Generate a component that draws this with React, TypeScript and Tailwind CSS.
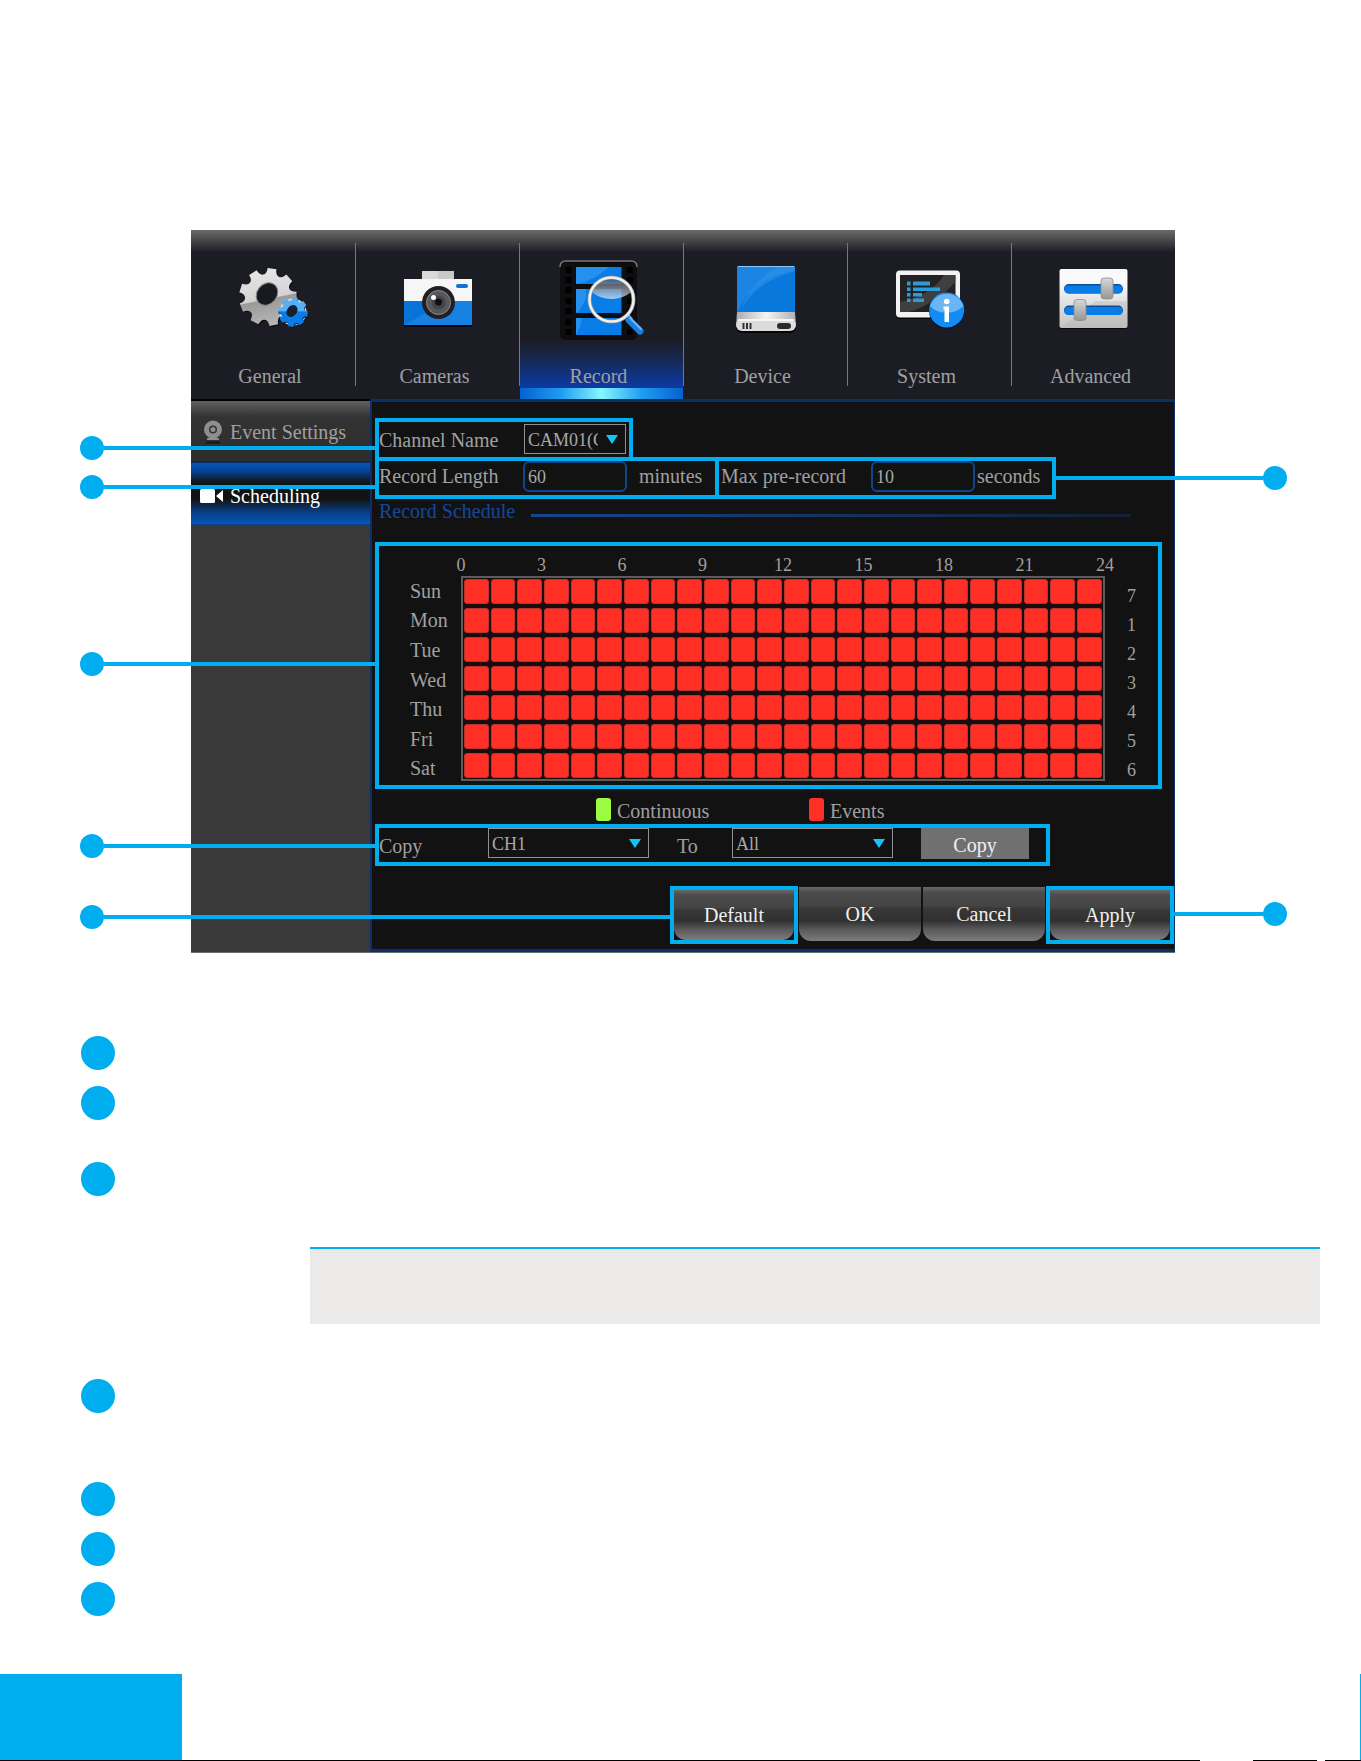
import clsx from 'clsx'
import React from 'react'

type CellMode = 'continuous' | 'events'

type CalloutProps = {
  side: 'left' | 'right'
  className: string
}

const DAYS = ['Sun', 'Mon', 'Tue', 'Wed', 'Thu', 'Fri', 'Sat']
const DAY_NUMBERS = [7, 1, 2, 3, 4, 5, 6]
const HOUR_MARKS = [0, 3, 6, 9, 12, 15, 18, 21, 24]

const FRAME = 'relative border-4 border-[#00aeef]'

const gearPath = (cx: number, cy: number, outer: number, inner: number, teeth: number) => {
  const step = (Math.PI * 2) / teeth
  const at = (radius: number, angle: number) =>
    `${(cx + radius * Math.cos(angle)).toFixed(2)} ${(cy + radius * Math.sin(angle)).toFixed(2)}`

  return (
    Array.from({ length: teeth }, (_, i) => {
      const a = i * step - Math.PI / 2.2
      return [
        `${i === 0 ? 'M' : 'L'}${at(outer, a - step * 0.22)}`,
        `L${at(outer, a + step * 0.22)}`,
        `Q${at(inner, a + step * 0.28)} ${at(inner, a + step * 0.5)}`,
        `Q${at(inner, a + step * 0.72)} ${at(outer, a + step * 0.78)}`,
      ].join(' ')
    }).join(' ') + 'Z'
  )
}

const GeneralIcon = () => (
  <svg viewBox="0 0 84 84" className="h-[84px] w-[84px] overflow-visible" aria-hidden="true">
    <defs>
      <linearGradient id="gearGray" x1="0.1" y1="0" x2="0.3" y2="1">
        <stop offset="0" stopColor="#e9e9e9" />
        <stop offset="0.58" stopColor="#d2d3d2" />
        <stop offset="0.6" stopColor="#9a9a9a" />
        <stop offset="1" stopColor="#b4b4b4" />
      </linearGradient>
      <linearGradient id="gearBlue" x1="0" y1="0" x2="0" y2="1">
        <stop offset="0.45" stopColor="#55b0f8" />
        <stop offset="0.5" stopColor="#0a7cea" />
      </linearGradient>
    </defs>
    <path d={gearPath(41, 40, 29, 23, 9)} fill="#08080c" />
    <path d={gearPath(40, 39, 29, 23, 9)} fill="url(#gearGray)" />
    <ellipse cx="39" cy="36" rx="10" ry="12" transform="rotate(38 39 36)" fill="#191920" stroke="#8a8a8a" />
    <circle cx="65" cy="54" r="13.500" fill="#d8d8d8" />
    <path d={gearPath(65.5, 55, 15, 11.5, 8)} fill="#0b1420" />
    <path d={gearPath(65, 54, 15, 11.5, 8)} fill="url(#gearBlue)" />
    <ellipse cx="64" cy="53" rx="5" ry="6.500" transform="rotate(35 64 53)" fill="#14202e" />
  </svg>
)

const CamerasIcon = () => (
  <svg viewBox="0 0 84 84" className="h-[84px] w-[84px] overflow-visible" aria-hidden="true">
    <path d="M29 13h32v9H29z" fill="#c9c9cb" />
    <path d="M29 13h16v9H29z" fill="#d9d9da" />
    <path d="M11 22h68v47H11z" fill="#08080c" />
    <path d="M11 21h68v23H11z" fill="#f6f6f7" />
    <path d="M11 43h68v24H11z" fill="#0873d8" />
    <path d="M11 67l44-24h24v24z" fill="#1681e2" />
    <rect x="63" y="26" width="12" height="4" rx="2" fill="#1273d4" />
    <circle cx="45.5" cy="44.5" r="16.5" fill="#202024" />
    <circle cx="45.5" cy="44.5" r="12" fill="#58585a" stroke="#8a8a8c" />
    <circle cx="45.5" cy="44.5" r="7" fill="#454547" />
    <circle cx="45.5" cy="44" r="3.5" fill="#101012" />
    <circle cx="40.5" cy="39.5" r="2.5" fill="#fff" />
  </svg>
)

const RecordIcon = () => (
  <svg viewBox="0 0 84 84" className="h-[84px] w-[84px] overflow-visible" aria-hidden="true">
    <defs>
      <linearGradient id="lensShine" x1="0" y1="0" x2="0" y2="1">
        <stop offset="0" stopColor="#4c5058" />
        <stop offset="1" stopColor="#d4e6f6" />
      </linearGradient>
    </defs>
    <rect x="3" y="3" width="77" height="79" rx="5" fill="#0e0e10" />
    <path d="M3 9q0-6 6-6h65q6 0 6 6" fill="none" stroke="#77777b" strokeWidth="1.5" />
    {[9, 19, 29, 40, 50, 61, 71].map((y) => (
      <g key={y} fill="#000">
        <rect x="8.500" y={y} width="6" height="6" />
        <rect x="70" y={y} width="6" height="6" />
      </g>
    ))}
    <path d="M19 9h45.500v17H19zM19 31h45.500v24H19zM19 60h45.500v17H19z" fill="#087de8" />
    <path d="M19 26q18-3 33-17H19zM19 55q4-1 10-15V31H19zM19 77q4-6 6-17h-6z" fill="#3a9df2" opacity="0.6" />
    <path d="M35 34Q42 20 54.500 20T74 34Q66 41 54.500 41T35 34Z" fill="url(#lensShine)" opacity="0.75" />
    <circle cx="54.500" cy="41.500" r="22" fill="none" stroke="#8f9092" strokeWidth="4" />
    <circle cx="54.500" cy="41.500" r="22" fill="none" stroke="#f0f0f0" strokeWidth="2.500" />
    <path d="M70 58l4 4" stroke="#d0d0d0" strokeWidth="5" />
    <path d="M72 62l11 11" stroke="#1c7fe0" strokeWidth="7" strokeLinecap="round" />
    <path d="M73 60l11 11" stroke="#6db7f8" strokeWidth="2" strokeLinecap="round" />
  </svg>
)

const DeviceIcon = () => (
  <svg viewBox="0 0 84 84" className="h-[84px] w-[84px] overflow-visible" aria-hidden="true">
    <defs>
      <linearGradient id="driveEdge" x1="0" y1="0" x2="1" y2="0">
        <stop offset="0" stopColor="#aaaaaa" />
        <stop offset="0.5" stopColor="#f5f5f5" />
        <stop offset="1" stopColor="#b0b0b0" />
      </linearGradient>
    </defs>
    <rect x="15" y="63" width="60" height="12" rx="6" fill="#050508" />
    <path d="M16 9q0-1 2-1h54q2 0 2 1v46H16z" fill="#0878dc" />
    <path d="M16 55Q30 20 74 12V9q0-1-2-1H18q-2 0-2 1z" fill="#1c84e2" />
    <path d="M20 52Q34 24 74 13V9H56Q28 26 20 52z" fill="#2f92e8" opacity="0.6" />
    <path d="M17 8.500h56" stroke="#8cc6f4" />
    <path d="M16 54h58l1 13H15z" fill="url(#driveEdge)" />
    <rect x="15" y="61" width="60" height="12" rx="6" fill="#dcdcdc" />
    <path d="M17 62h56" stroke="#fff" strokeWidth="1.500" />
    <path d="M22.500 65v6M26 65v6M29.500 65v6" stroke="#333" strokeWidth="2" />
    <rect x="56" y="65" width="14" height="6" rx="3" fill="#2a2a2c" />
  </svg>
)

const SystemIcon = () => (
  <svg viewBox="0 0 84 84" className="h-[84px] w-[84px] overflow-visible" aria-hidden="true">
    <rect x="11" y="14" width="64" height="47" rx="4" fill="#050508" />
    <rect x="11" y="12.500" width="64" height="47" rx="4" fill="#f2f2f2" />
    <path d="M15 17h55.500v37H15z" fill="#222225" />
    <path d="M15 54V44q30-6 44-27h11.500v7Q50 46 24 54z" fill="#4b4b4e" opacity="0.7" />
    <path
      d="M22 23.500h3.500v4H22zM22 29.500h3.500v3.500H22zM22 35h3.500v3.500H22zM22 40.500h3.500V44H22zM28 23.500h17v4H28zM28 29.500h27v3.500H28zM28 35h9v3.500h-9zM28 40.500h11V44H28z"
      fill="#2a9cd8"
    />
    <circle cx="61.700" cy="53.500" r="17.500" fill="#071226" />
    <circle cx="61.700" cy="52" r="17.500" fill="#128cf4" />
    <path d="M45 48a17.500 17.500 0 0 1 33.400 0Q70 56 61.700 54 53 56 45 48Z" fill="#6ab6f4" />
    <circle cx="61.700" cy="43.500" r="2.800" fill="#fff" />
    <path d="M58.500 48.500H64V64h-4.500V51.500h-1z" fill="#fff" />
  </svg>
)

const AdvancedIcon = () => (
  <svg viewBox="0 0 84 84" className="h-[84px] w-[84px] overflow-visible" aria-hidden="true">
    <defs>
      <linearGradient id="sliderPlate" x1="0" y1="0" x2="0" y2="1">
        <stop offset="0.2" stopColor="#fafafa" />
        <stop offset="1" stopColor="#c4c4c4" />
      </linearGradient>
      <linearGradient id="sliderKnob" x1="0" y1="0" x2="0" y2="1">
        <stop offset="0" stopColor="#d8d8d8" />
        <stop offset="1" stopColor="#969696" />
      </linearGradient>
    </defs>
    <rect x="10.500" y="12" width="68" height="59" rx="2" fill="#08080c" />
    <rect x="10.500" y="11" width="68" height="59" rx="2" fill="url(#sliderPlate)" />
    <path d="M12 70L46 43h32.500v25q0 2-2 2z" fill="#aaa" opacity="0.3" />
    {[26, 47.5].map((y) => (
      <g key={y}>
        <rect x="15" y={y} width="59" height="9.500" rx="4.700" fill="#0b4f9c" />
        <rect x="15.500" y={y + 1.5} width="58" height="8" rx="4" fill="#0a7ce8" />
      </g>
    ))}
    <rect x="52" y="20" width="12" height="21" rx="3" fill="url(#sliderKnob)" stroke="#8d8d8d" strokeWidth="0.800" />
    <rect x="25" y="41.500" width="12" height="21" rx="3" fill="url(#sliderKnob)" stroke="#8d8d8d" strokeWidth="0.800" />
  </svg>
)

const TABS = [
  { label: 'General', Icon: GeneralIcon },
  { label: 'Cameras', Icon: CamerasIcon },
  { label: 'Record', Icon: RecordIcon },
  { label: 'Device', Icon: DeviceIcon },
  { label: 'System', Icon: SystemIcon },
  { label: 'Advanced', Icon: AdvancedIcon },
]

// Leader line with a dot at its far end, hung on the frame that it points to
const Callout: React.FC<CalloutProps> = ({ side, className }) => (
  <span
    aria-hidden="true"
    className={clsx(
      'pointer-events-none absolute flex h-6 items-center',
      side === 'left' ? 'right-full' : 'left-full flex-row-reverse',
      className
    )}
  >
    <span className="size-6 shrink-0 rounded-full bg-[#00aeef]" />
    <span className="h-1 flex-1 bg-[#00aeef]" />
  </span>
)

type DropdownProps = {
  id: string
  options: string[]
  className?: string
}

const Dropdown: React.FC<DropdownProps> = ({ id, options, className }) => (
  <span className={clsx('grid h-[30px] shrink-0 items-center', className)}>
    <select
      id={id}
      className="col-start-1 row-start-1 h-[30px] w-full appearance-none border border-[#909090] bg-transparent pt-px pr-[27px] pl-[3px] text-lg leading-6 text-[#a8a8a8]"
    >
      {options.map((option) => (
        <option key={option}>{option}</option>
      ))}
    </select>
    <svg viewBox="0 0 12 9" className="pointer-events-none col-start-1 row-start-1 mr-2 h-[9px] w-3 justify-self-end">
      <path d="M0 0h12L6 9z" fill="#14c4f4" />
    </svg>
  </span>
)

const NumberBox: React.FC<{ id: string; value: string }> = ({ id, value }) => (
  <input
    id={id}
    type="text"
    defaultValue={value}
    className="h-[31px] w-[104px] shrink-0 rounded-md border-2 border-[#0f458c] bg-transparent pt-px pl-[3px] text-lg text-[#a8a8a8]"
  />
)

const FooterButton: React.FC<{ label: string; className?: string }> = ({ label, className }) => (
  <button
    type="button"
    className={clsx(
      'rounded-b-xl bg-[linear-gradient(#686868_0%,#4c4c4c_10%,#444_35%,#383838_40%,#303030_62%,#5c5c5c_80%,#7c7c7c_100%)] text-xl leading-6 text-[#f0f0f0]',
      className
    )}
  >
    {label}
  </button>
)

const TabBar = () => (
  <nav className="bg-[#1c1c25] bg-[linear-gradient(#6a6a6c_0px,#3a3a3e_14px,#1c1c25_22px)]">
    <ul className="flex h-[169px]">
      {TABS.map(({ label, Icon }, index) => {
        const isActive = label === 'Record'

        return (
          <li key={label} className="flex flex-1">
            {index > 0 && <span className="mt-[13px] h-[143px] w-px bg-[#77777a]" />}
            <button
              type="button"
              aria-current={isActive ? 'page' : undefined}
              className={clsx(
                'flex flex-1 flex-col items-center text-xl leading-6 text-[#a0a0a0]',
                isActive && 'bg-[linear-gradient(transparent_110px,#16284f_128px,#0c3aa0_156px)]'
              )}
            >
              <span className="flex flex-1 flex-col items-center pt-7 pr-[6px]">
                <Icon />
                <span className="mt-[22px]">{label}</span>
              </span>
              {isActive && (
                <span className="h-[13px] w-full bg-[linear-gradient(90deg,#0662d0,#1f9cf0_25%,#86f6ff_50%,#1f9cf0_75%,#0662d0)]" />
              )}
            </button>
          </li>
        )
      })}
    </ul>
  </nav>
)

const Sidebar = () => (
  <aside className="w-[179px] shrink-0 border-t-2 border-black bg-[#393939] text-xl leading-6">
    <a
      href="#event-settings"
      className="flex h-[60px] items-center gap-[7px] bg-[linear-gradient(#606060,#444_10px,#333_16px,#2d2d2d)] pt-[2px] pl-3 whitespace-nowrap text-[#a0a0a0]"
    >
      <svg viewBox="0 0 20 24" className="h-6 w-5 shrink-0" aria-hidden="true">
        <circle cx="10" cy="9.500" r="6.500" fill="none" stroke="#8e8e8e" strokeWidth="5" />
        <circle cx="10" cy="9.500" r="2.500" fill="#8e8e8e" />
        <path d="M4 18.500l3-1.500h6l3 1.500v1.500H4z" fill="#8e8e8e" />
        <path d="M3 22.500h14" stroke="#161616" strokeWidth="2" />
      </svg>
      Event Settings
    </a>
    <a
      href="#scheduling"
      aria-current="page"
      className="flex h-[65px] items-center gap-[7px] border-y-2 border-t-[#0a2a62] border-b-[#0d3f8c] bg-[linear-gradient(#0855b4_0px,#064296_8px,#121212_20px,#121212_36px,#07418c_50px,#0855b4_60px)] pt-1 pl-[9px] text-white"
    >
      <svg viewBox="0 0 23 14" className="h-[14px] w-[23px] shrink-0" aria-hidden="true">
        <rect width="15" height="14" rx="1.500" fill="#fff" />
        <path d="M16 7l7-6v12z" fill="#fff" />
      </svg>
      Scheduling
    </a>
  </aside>
)

const ScheduleGrid = () => {
  const [modes, setModes] = React.useState<CellMode[][]>(() =>
    DAYS.map(() => Array.from({ length: 24 }, (): CellMode => 'events'))
  )

  const toggle = (day: number, hour: number) =>
    setModes((current) =>
      current.map((row, d) =>
        d === day ? row.map((mode, h) => (h === hour ? (mode === 'events' ? 'continuous' : 'events') : mode)) : row
      )
    )

  return (
    <div className={clsx(FRAME, 'mr-3 flex pb-1 pl-[31px] text-[#a0a0a0]')}>
      <Callout side="left" className="top-[106px] w-[299px]" />
      <ul className="-mb-[2px] flex w-[51px] flex-col pt-[30px] text-xl">
        {DAYS.map((day) => (
          <li key={day} className="flex flex-1 items-center leading-6">
            {day}
          </li>
        ))}
      </ul>
      <div className="flex-1">
        <div className="flex h-[30px] items-center justify-between pt-[7px] text-lg leading-6">
          {HOUR_MARKS.map((hour) => (
            <span key={hour} className="flex w-0 justify-center">
              {hour}
            </span>
          ))}
        </div>
        <div className="border-2 border-[#5c5c5c] bg-[#1a0c0c] py-px">
          <table aria-label="Record Schedule" className="w-full table-fixed border-collapse">
            <tbody>
              {modes.map((row, day) => (
                <tr key={DAYS[day]} className="group">
                  {row.map((mode, hour) => (
                    <td key={hour} className="px-px pb-1 group-last:pb-0">
                      <button
                        type="button"
                        aria-label={`${DAYS[day]} ${hour}:00 ${mode}`}
                        onClick={() => toggle(day, hour)}
                        className={clsx('block h-[25px] w-full rounded-[3px] border', {
                          'border-[#b8342e] bg-[#ff2f26]': mode === 'events',
                          'border-[#6fae38] bg-[#9cfc42]': mode === 'continuous',
                        })}
                      />
                    </td>
                  ))}
                </tr>
              ))}
            </tbody>
          </table>
        </div>
      </div>
      <ul className="-mb-[3px] flex w-[53px] flex-col pt-9 text-lg">
        {DAY_NUMBERS.map((number) => (
          <li key={number} className="flex flex-1 items-center justify-center leading-6">
            {number}
          </li>
        ))}
      </ul>
    </div>
  )
}

const RecordPanel = () => (
  <form
    className="min-w-0 flex-1 border-t-[3px] border-r border-b-[3px] border-l-2 border-[#0d2f68] bg-[#121212] pt-4 pb-[5px] pl-[3px] text-xl leading-6 whitespace-nowrap text-[#a0a0a0]"
    onSubmit={(event) => event.preventDefault()}
  >
    <div className={clsx(FRAME, 'flex h-[43px] w-[258px] items-start pt-[2px]')}>
      <Callout side="left" className="top-[14px] w-[299px]" />
      <label htmlFor="channel" className="w-[145px] pt-1">
        Channel Name
      </label>
      <Dropdown id="channel" options={['CAM01(CAM01)', 'CAM02(CAM02)']} className="w-[102px]" />
    </div>

    <div className="-mt-1 flex">
      <div className={clsx(FRAME, 'flex h-[42px] w-[344px] items-start')}>
        <Callout side="left" className="top-[14px] w-[299px]" />
        <label htmlFor="length" className="w-36 pt-[3px]">
          Record Length
        </label>
        <NumberBox id="length" value="60" />
        <span className="pt-[3px] pl-3">minutes</span>
      </div>
      <div className={clsx(FRAME, '-ml-1 flex h-[42px] w-[341px] items-start pl-[2px]')}>
        <Callout side="right" className="top-[5px] w-[235px]" />
        <label htmlFor="prerecord" className="w-[150px] pt-[3px]">
          Max pre-record
        </label>
        <NumberBox id="prerecord" value="10" />
        <span className="pt-[3px] pl-[2px]">seconds</span>
      </div>
    </div>

    <div className="flex h-[43px] items-start pr-[43px] pl-1">
      <h2 className="w-[152px] text-[#12489a]">Record Schedule</h2>
      <span className="mt-[15px] h-[3px] flex-1 bg-linear-to-r from-[#12468f] to-[#122036]" />
    </div>

    <ScheduleGrid />

    <div className="flex h-[35px] items-start pt-[6px] pl-[221px]">
      <span className="flex w-[213px] items-center gap-[6px]">
        <span className="h-[23px] w-[15px] rounded-[3px] bg-[#9cfc42]" />
        <span className="pt-1">Continuous</span>
      </span>
      <span className="flex items-center gap-[6px]">
        <span className="h-[23px] w-[15px] rounded-[3px] bg-[#ff2f26]" />
        <span className="pt-1">Events</span>
      </span>
    </div>

    <div className={clsx(FRAME, 'flex h-[42px] w-[675px] items-start')}>
      <Callout side="left" className="top-[6px] w-[299px]" />
      <label htmlFor="copy-from" className="w-[109px] pt-[6px]">
        Copy
      </label>
      <Dropdown id="copy-from" options={['CH1', 'CH2', 'CH3', 'CH4']} className="w-[161px]" />
      <label htmlFor="copy-to" className="w-[83px] pt-[6px] pl-7">
        To
      </label>
      <Dropdown id="copy-to" options={['All', 'CH1', 'CH2']} className="w-[161px]" />
      <button type="button" className="ml-7 h-[31px] w-[108px] bg-[#707070] pt-[2px] text-[#f0f0f0]">
        Copy
      </button>
    </div>

    <div className="mt-5 flex items-start justify-end">
      <div className={clsx(FRAME, 'flex h-[58px] w-32')}>
        <Callout side="left" className="top-[15px] w-[594px]" />
        <FooterButton label="Default" className="flex-1" />
      </div>
      <FooterButton label="OK" className="mx-px mt-px h-[54px] w-[122px]" />
      <FooterButton label="Cancel" className="mx-px mt-px h-[54px] w-[122px]" />
      <div className={clsx(FRAME, 'flex h-[58px] w-32')}>
        <Callout side="right" className="top-3 w-[117px]" />
        <FooterButton label="Apply" className="flex-1" />
      </div>
    </div>
  </form>
)

const Marker = () => <span className="block size-[34px] rounded-full bg-[#00aeef]" />

const App = () => (
  <div className="min-h-screen bg-white font-['Liberation_Serif',serif]">
    <main className="pt-[230px]">
      <section className="mr-[186px] ml-[191px] border-b border-[#6c6c74]">
        <TabBar />
        <div className="flex">
          <Sidebar />
          <RecordPanel />
        </div>
      </section>

      <section className="pt-[83px] pr-[41px] pb-[58px] pl-[81px]">
        <div className="flex flex-col gap-4">
          <Marker />
          <Marker />
        </div>
        <div className="mt-[42px]">
          <Marker />
        </div>
        <div className="mt-[51px] ml-[229px] h-[77px] border-t-2 border-[#00aeef] bg-[#ebeae9]" />
        <div className="mt-[55px]">
          <Marker />
        </div>
        <div className="mt-[69px] flex flex-col gap-4">
          <Marker />
          <Marker />
          <Marker />
        </div>
      </section>
    </main>

    <footer>
      <div className="flex h-[86px] justify-between">
        <span className="w-[182px] bg-[#00aeef]" />
        <span className="w-px bg-[#00aeef]" />
      </div>
      <div className="flex h-px">
        <span className="flex-1 bg-black" />
        <span className="ml-[53px] w-16 bg-black" />
        <span className="ml-2 w-9 bg-black" />
      </div>
    </footer>
  </div>
)

export default App
